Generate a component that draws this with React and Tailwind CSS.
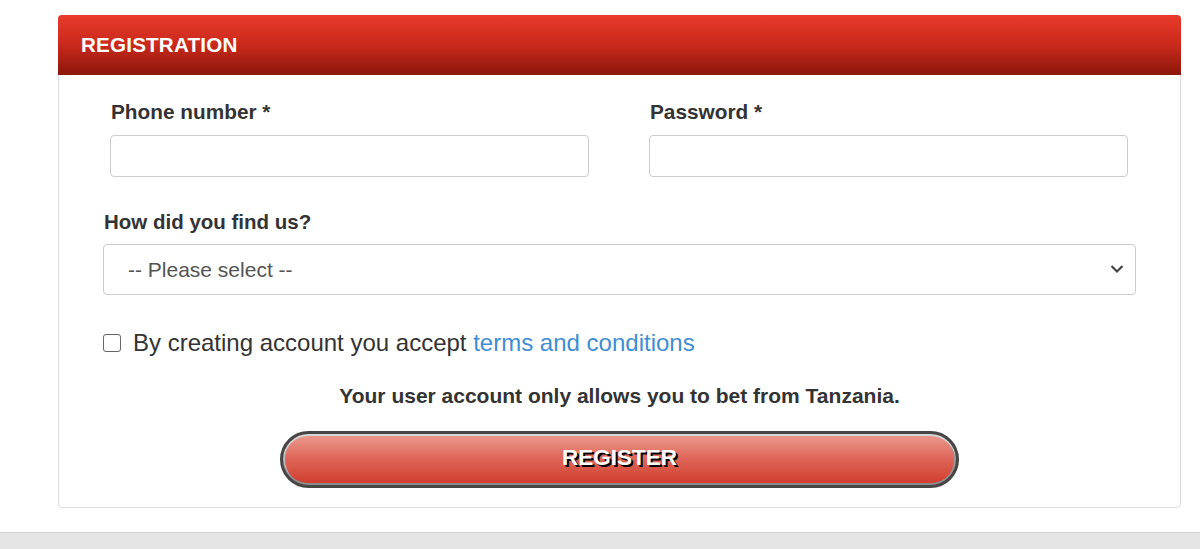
import React from "react";

export default function App() {
  return (
    <div className="w-full min-h-[549px] bg-white flex flex-col font-['Liberation_Sans',Arial,sans-serif] text-[#333]">
      <div className="pt-[15px] pl-[58px] pr-[19px]">
        <div className="border border-[#dcdcdc] rounded-[4px] bg-white">
          <div className="h-[60px] -mx-px -mt-px rounded-t-[4px] bg-gradient-to-b from-[#e83b2b] via-[#c9291c] to-[#8b170a] flex items-center px-[23px]">
            <h2 className="text-white font-bold text-[20.6px] tracking-[0.2px]">REGISTRATION</h2>
          </div>

          <div className="px-[44px] pb-[19px]">
            <div className="grid grid-cols-2 gap-x-[60px] pl-[7px] pr-[8px] pt-[25px]">
              <Field label="Phone number *" />
              <Field label="Password *" type="password" />
            </div>

            <div className="mt-[33px]">
              <label className="block font-bold text-[20.5px] leading-[24px] pl-px">How did you find us?</label>
              <div className="relative mt-[10px]">
                <select className="appearance-none w-full h-[51px] border border-[#ccc] rounded-[4px] bg-white pl-[24px] text-[21px] text-[#555] outline-none">
                  <option>-- Please select --</option>
                </select>
                <svg className="absolute right-[12px] top-[20px] pointer-events-none" width="14" height="10" viewBox="0 0 14 10" fill="none">
                  <path d="M1.5 2 L7 7.5 L12.5 2" stroke="#444" strokeWidth="2.2" />
                </svg>
              </div>
            </div>

            <div className="flex items-center mt-[34px]">
              <span className="w-[18px] h-[18px] border-[1.5px] border-[#666] rounded-[3px] bg-white shrink-0" />
              <p className="ml-[12px] text-[24px] leading-[28px]">
                By creating account you accept{" "}
                <a className="text-[#3f8dd3]">terms and conditions</a>
              </p>
            </div>

            <p className="text-center font-bold text-[21px] leading-[24px] mt-[27px]">
              Your user account only allows you to bet from Tanzania.
            </p>

            <div className="flex justify-center mt-[23px]">
              <button className="w-[679px] h-[57px] pb-[4px] rounded-full border-[3px] border-[#464646] bg-gradient-to-b from-[#eb9a90] via-[#dd6456] to-[#d0392a] shadow-[inset_0_2px_0_#d6d6d6,inset_0_-2px_0_#8c8c8c,inset_2px_0_0_#bbb,inset_-2px_0_0_#999] text-white font-bold text-[22.5px] [text-shadow:2px_2px_0_#000]">
                REGISTER
              </button>
            </div>
          </div>
        </div>
      </div>
      <div className="mt-auto h-[17px] bg-[#e5e5e5] border-t border-[#d2d2d2]" />
    </div>
  );
}

function Field({ label, type = "text" }) {
  return (
    <div>
      <label className="block font-bold text-[20.8px] leading-[24px] pl-px">{label}</label>
      <input
        type={type}
        className="mt-[11px] w-full h-[42px] border border-[#ccc] rounded-[4px] bg-white outline-none px-3 text-[18px]"
      />
    </div>
  );
}
